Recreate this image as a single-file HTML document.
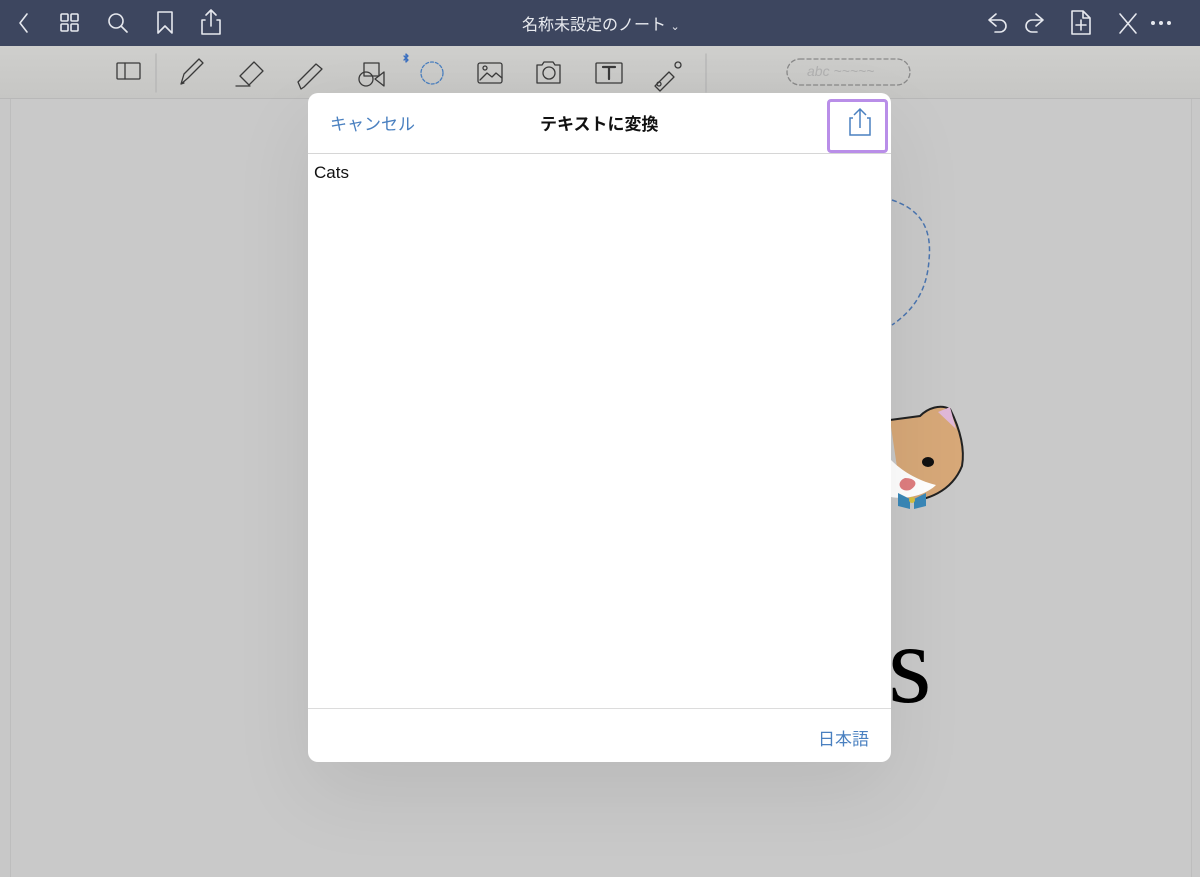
<!DOCTYPE html>
<html><head><meta charset="utf-8"><style>
body{margin:0;width:1200px;height:877px;overflow:hidden;background:#c8c8c8;font-family:"Liberation Sans","Noto Sans CJK JP",sans-serif;position:relative}
.top{position:absolute;left:0;top:0;width:1200px;height:46px;background:#3d465f}
.tb{position:absolute;left:0;top:46px;width:1200px;height:52px;background:linear-gradient(#cfcfcd,#c6c6c4);border-bottom:1px solid #b8b8b8}
.page{position:absolute;left:10px;top:99px;width:1180px;height:778px;background:#c9c9c9;border-left:1px solid #bdbdbd;border-right:1px solid #bdbdbd}
svg{position:absolute;overflow:visible}
.dlg{position:absolute;left:308px;top:93px;width:583px;height:669px;background:#fff;border-radius:10px;box-shadow:0 30px 80px rgba(0,0,0,.08)}
.t{position:absolute;white-space:nowrap}
</style></head><body>
<div class="top"></div>
<div class="tb"></div>
<div class="page"></div>
<svg width="1200" height="46" style="left:0;top:0" fill="none" stroke="#e6e8ee" stroke-width="1.6" stroke-linecap="round" stroke-linejoin="round">
<path d="M27 14l-7 9 7 9"/>
<rect x="61" y="14" width="7" height="7" rx="1"/><rect x="71" y="14" width="7" height="7" rx="1"/><rect x="61" y="24" width="7" height="7" rx="1"/><rect x="71" y="24" width="7" height="7" rx="1"/>
<circle cx="116" cy="21" r="7"/><path d="M121 26l6 6"/>
<path d="M158 12h14v21l-7-7-7 7z"/>
<path d="M205 20h-3v14h18v-14h-3M211 26v-15M206 15l5-5 5 5"/>
<path d="M996 14l-7 6 7 6M989 20h11a6 6 0 0 1 0 12h-5"/>
<path d="M1036 14l7 6-7 6M1043 20h-11a6 6 0 0 0 0 12h5"/>
<path d="M1072 11h11l7 7v16h-18zM1083 11v7h7M1081 20v10M1076 25h10"/>
<path d="M1120 14l16 19M1136 14l-16 19"/>
<circle cx="1153" cy="23" r="1.2" fill="#e6e8ee"/><circle cx="1161" cy="23" r="1.2" fill="#e6e8ee"/><circle cx="1169" cy="23" r="1.2" fill="#e6e8ee"/>
</svg>
<div class="t" style="left:522px;top:11px;font-size:16px;color:#e8eaef">名称未設定のノート <span style="font-size:11px">⌄</span></div>
<svg width="1200" height="52" style="left:0;top:46px" fill="none" stroke="#3a3a3a" stroke-width="1.3" stroke-linecap="round" stroke-linejoin="round">
<rect x="117" y="17" width="23" height="16" rx="1"/><path d="M125 17v16"/>
<path d="M156 8v38" stroke="#b5b5b5"/>
<path d="M181 38l3-10 15-15 4 4-15 15z M181 38l3-1"/>
<path d="M240 30l14-14 9 9-14 14zM236 40h14"/>
<path d="M298 36l4-4 14-14 6 5-14 14-4 4-3 2z"/>
<rect x="364" y="17" width="15" height="13"/><circle cx="366" cy="33" r="7"/><path d="M384 26v14l-9-7z"/>
<circle cx="432" cy="27" r="11" stroke="#4a7fbf" stroke-dasharray="3 2"/>
<path d="M404 10l4 4-2 2v-8l2 2-4 4" stroke="#3a6fc0"/>
<rect x="478" y="17" width="24" height="20" rx="2"/><path d="M480 34l7-7 5 4 4-4 6 5"/><circle cx="485" cy="22" r="2"/>
<path d="M537 19h5l2-3h9l2 3h5v18h-23z"/><circle cx="549" cy="27" r="6"/>
<rect x="596" y="17" width="26" height="20" rx="1"/><path d="M603 21h12M609 21v12" stroke-width="2.2"/>
<path d="M655 40l14-14 5 5-14 14z"/><circle cx="659" cy="38" r="2"/><circle cx="678" cy="19" r="3"/>
<path d="M706 8v38" stroke="#b5b5b5"/>
<rect x="787" y="13" width="123" height="26" rx="13" stroke="#888" stroke-dasharray="4 3"/>
</svg>
<div class="t" style="left:807px;top:63px;font-size:14px;color:#b0b0b0;font-style:italic">abc ~~~~~</div>
<svg width="1200" height="877" style="left:0;top:0" fill="none">
<path d="M892 200c30 10 40 30 37 60-2 30-15 50-37 65" stroke="#4a75b0" stroke-width="1.5" stroke-dasharray="5 3"/>
<path d="M890 420l30-4c8-8 20-12 30-7 10 20 15 40 12 57-10 25-35 36-60 35" fill="#d7a878" stroke="#222" stroke-width="2"/>
<path d="M891 460c10 10 25 20 45 25-10 10-30 15-45 12z" fill="#fff"/>
<path d="M938 412l12-5 6 22z" fill="#e0b8d8"/>
<path d="M905 478c10 0 15 6 5 12-10 3-15-8-5-12z" fill="#e07e80"/>
<ellipse cx="928" cy="462" rx="6" ry="5" fill="#111"/>
<path d="M898 493l12 6v10l-12-3zM926 493l-12 6v10l12-3z" fill="#3a88b8"/><circle cx="912" cy="500" r="3" fill="#d8c040"/>
<text x="888" y="702" font-family="Liberation Serif" font-size="112" fill="#000">s</text>
</svg>
<div class="dlg">
<div class="t" style="left:22px;top:17px;font-size:17px;color:#4a80c0">キャンセル</div>
<div class="t" style="left:232px;top:17px;font-size:17px;font-weight:bold;color:#111">テキストに変換</div>
<div style="position:absolute;left:519px;top:6px;width:61px;height:54px;border:3px solid #b98ee8;border-radius:4px;box-sizing:border-box"></div>
<svg width="30" height="30" style="left:537px;top:15px" fill="none" stroke="#4a80c0" stroke-width="1.5"><path d="M8 10H5v17h20V10h-3M15 20V1M9 7l6-6 6 6"/></svg>
<div style="position:absolute;left:0;top:60px;width:583px;height:1px;background:#d6d6d6"></div>
<div class="t" style="left:6px;top:70px;font-size:17px;color:#111">Cats</div>
<div style="position:absolute;left:0;top:615px;width:583px;height:1px;background:#dcdcdc"></div>
<div class="t" style="left:510px;top:632px;font-size:17px;color:#4a80c0">日本語</div>
</div>
</body></html>
